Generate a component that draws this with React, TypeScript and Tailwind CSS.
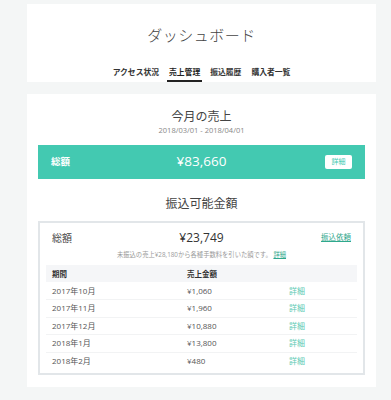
export default function App() {
    const tabs = ["アクセス状況", "売上管理", "振込履歴", "購入者一覧"];
    const rows = [
        { period: "2017年10月", amount: "¥1,060" },
        { period: "2017年11月", amount: "¥1,960" },
        { period: "2017年12月", amount: "¥10,880" },
        { period: "2018年1月", amount: "¥13,800" },
        { period: "2018年2月", amount: "¥480" }
    ];

    return (
        <div
            className="min-h-[400px] bg-[#f4f6f6] pt-[4px] pb-[15px]"
            style={{ fontFamily: '"Open Sans", "Noto Sans CJK JP", sans-serif' }}
        >
            <div className="ml-[27px] w-[349px] space-y-[12px]">
                {/* header card */}
                <div className="bg-white pt-[19px] flex flex-col items-center">
                    <h1 className="text-[15px] leading-[24px] font-light text-[#444] tracking-[0.5px]">
                        ダッシュボード
                    </h1>
                    <nav className="mt-[18px] flex gap-[6px]">
                        {tabs.map(tab => (
                            <span
                                key={tab}
                                className={
                                    tab === "売上管理"
                                        ? "px-[2px] pb-[1px] text-[7.8px] leading-[14px] font-bold text-[#222] border-b-2 border-[#222]"
                                        : "px-[2px] pb-[1px] text-[7.8px] leading-[14px] font-bold text-[#333] border-b-2 border-transparent"
                                }
                            >
                                {tab}
                            </span>
                        ))}
                    </nav>
                </div>

                {/* sales card */}
                <div className="bg-white px-[11px] pt-[14px] pb-[12px]">
                    <div className="text-center">
                        <h2 className="text-[12px] leading-[17px] text-[#444]">今月の売上</h2>
                        <p className="text-[7.5px] leading-[11px] text-[#888]">2018/03/01 - 2018/04/01</p>
                    </div>

                    <div className="mt-[9px] h-[34px] bg-[#43c9b1] flex items-center px-[13px] text-white">
                        <span className="w-[80px] text-[9.5px] font-bold">総額</span>
                        <span className="flex-1 text-center text-[13.5px] leading-none">¥83,660</span>
                        <span className="w-[80px] flex justify-end">
                            <span className="bg-white text-[#43c9b1] rounded-[2px] h-[14px] w-[27px] flex items-center justify-center text-[7px]">
                                詳細
                            </span>
                        </span>
                    </div>

                    <h2 className="mt-[16px] text-center text-[12px] leading-[18px] text-[#444]">振込可能金額</h2>

                    <div className="mt-[8px] border-2 border-[#e2e6e9] px-[6px] pt-[7px] pb-[3px]">
                        <div className="flex items-center h-[16px] px-[6px]">
                            <span className="w-[80px] text-[10px] text-[#444]">総額</span>
                            <span className="flex-1 text-center text-[12px] text-[#333] leading-none">¥23,749</span>
                            <span className="w-[80px] text-right text-[7.5px] text-[#2fa88c] underline">振込依頼</span>
                        </div>
                        <p className="mt-[4px] text-center text-[6.3px] leading-[10px] text-[#999]">
                            未振込の売上¥28,180から各種手数料を引いた額です。 <span className="text-[#2fa88c] underline">詳細</span>
                        </p>

                        <table className="mt-[5px] w-full text-left">
                            <thead>
                                <tr className="bg-[#f5f6f8] h-[17px]">
                                    <th className="pl-[6px] w-[141px] text-[7.5px] leading-[10px] font-bold text-[#333]">期間</th>
                                    <th className="w-[102px] text-[7.5px] leading-[10px] font-bold text-[#333]">売上金額</th>
                                    <th></th>
                                </tr>
                            </thead>
                            <tbody>
                                {rows.map(row => (
                                    <tr key={row.period} className="h-[17.5px] border-b border-[#f2f3f4] last:border-b-0">
                                        <td className="pl-[6px] text-[8px] leading-[10px] text-[#555]">{row.period}</td>
                                        <td className="text-[8px] leading-[10px] text-[#555]">{row.amount}</td>
                                        <td className="text-[8px] leading-[10px] text-[#5ccab3]">詳細</td>
                                    </tr>
                                ))}
                            </tbody>
                        </table>
                    </div>
                </div>
            </div>
        </div>
    );
}
